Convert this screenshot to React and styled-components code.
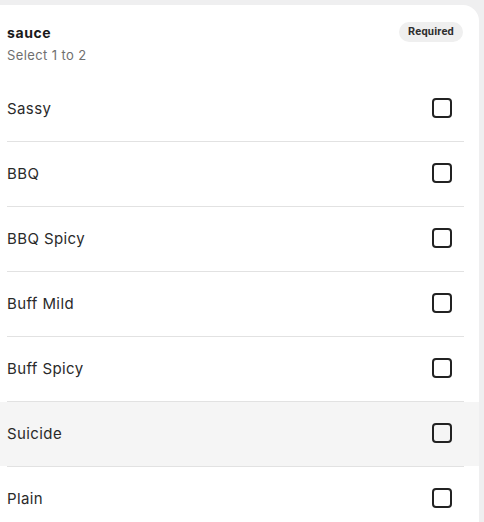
import React, { useState } from 'react';
import styled, { createGlobalStyle } from 'styled-components';

const Global = createGlobalStyle`
  html, body {
    margin: 0;
    padding: 0;
    background: #efeff0;
    font-family: Inter, "Noto Sans", sans-serif;
  }
`;

const Card = styled.div`
  margin-top: 5px;
  width: 479px;
  background: #fff;
  border-top-right-radius: 16px;
  overflow: hidden;
`;

const Header = styled.div`
  display: flex;
  justify-content: space-between;
  align-items: flex-start;
  height: 72px;
  box-sizing: border-box;
  padding: 17px 16px 0 7px;
`;

const Title = styled.div`
  font-size: 14px;
  font-weight: 700;
  color: #1a1a1a;
  line-height: 22px;
  letter-spacing: 0.6px;
`;

const Sub = styled.div`
  font-size: 13px;
  color: #6f6f6f;
  line-height: 22px;
  letter-spacing: 0.4px;
`;

const Pill = styled.span`
  height: 20px;
  padding: 0 9px;
  border-radius: 10px;
  background: #efefef;
  color: #2e2e2e;
  font-family: Roboto, "Liberation Sans", sans-serif;
  font-size: 11px;
  font-weight: 700;
  line-height: 20px;
  letter-spacing: 0.2px;
`;

const Row = styled.label`
  display: flex;
  align-items: center;
  justify-content: space-between;
  height: 64px;
  box-sizing: border-box;
  padding: 0 27px 2px 7px;
  background: ${p => (p.$hover ? '#f5f5f5' : '#fff')};
  font-size: 15px;
  letter-spacing: 0.4px;
  color: #2a2a2a;
  cursor: pointer;
`;

const Divider = styled.div`
  height: 1px;
  margin: 0 15px 0 7px;
  background: #e2e2e2;
`;

const Box = styled.span`
  width: 20px;
  height: 20px;
  box-sizing: border-box;
  border: 2px solid #222;
  border-radius: 4px;
  background: ${p => (p.$on ? '#222' : 'transparent')};
`;

const options = ['Sassy', 'BBQ', 'BBQ Spicy', 'Buff Mild', 'Buff Spicy', 'Suicide', 'Plain'];

export default function App() {
  const [picked, setPicked] = useState([]);
  const toggle = name =>
    setPicked(p => (p.includes(name) ? p.filter(x => x !== name) : [...p, name]));

  return (
    <>
      <Global />
      <Card>
        <Header>
          <div>
            <Title>sauce</Title>
            <Sub>Select 1 to 2</Sub>
          </div>
          <Pill>Required</Pill>
        </Header>
        {options.map((name, i) => (
          <React.Fragment key={name}>
            {i > 0 && <Divider />}
            <Row $hover={name === 'Suicide'} onClick={() => toggle(name)}>
              {name}
              <Box $on={picked.includes(name)} />
            </Row>
          </React.Fragment>
        ))}
      </Card>
    </>
  );
}
